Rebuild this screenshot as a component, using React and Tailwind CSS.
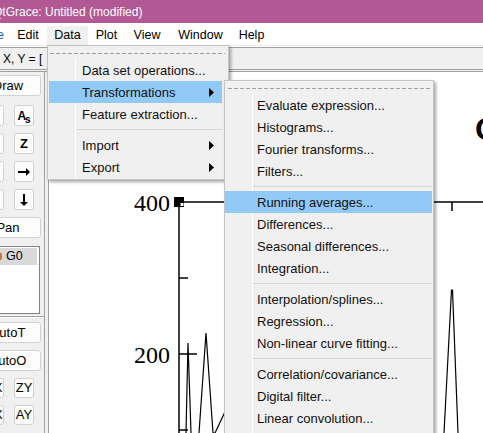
import React from "react";

const Arrow = () => (
  <svg width="5" height="9" viewBox="0 0 5 9" className="absolute right-[8px] top-[7px]">
    <path d="M0 0 L5 4.5 L0 9 Z" fill="#000" />
  </svg>
);

function Item({ label, hl, sub, pl = "pl-[33px]", mx = "ml-px mr-[6px]" }) {
  return (
    <div
      className={`relative h-[22px] flex items-center ${pl} ${mx} ${hl ? "bg-[#91c9f7]" : ""}`}
    >
      <span className="text-[13px] text-[#111] whitespace-nowrap translate-y-[0.5px]">{label}</span>
      {sub && <Arrow />}
    </div>
  );
}

function Sep({ cls }) {
  return (
    <div className="h-[9px] flex items-center">
      <div className={`h-px flex-1 bg-[#d7d7d7] ${cls}`} />
    </div>
  );
}

function Btn({ children, w = "w-[20px]", h = "h-[21px]", cls = "" }) {
  return (
    <div
      className={`${w} ${h} shrink-0 rounded-[3px] border border-[#d2d2d2] bg-[#fdfdfd] flex items-center justify-center text-[13px] text-black ${cls}`}
    >
      {children}
    </div>
  );
}

export default function App() {
  return (
    <div className="relative w-[483px] h-[433px] overflow-hidden bg-white font-['Liberation_Sans',Arial,sans-serif]">
      {/* title bar */}
      <div className="h-[23px] bg-[#b15895] text-white text-[12px] flex items-center whitespace-nowrap">
        <span className="ml-[-7px]">QtGrace: Untitled (modified)</span>
      </div>
      {/* menu bar */}
      <div className="h-[22px] bg-white flex items-end text-[12.5px] text-black whitespace-nowrap">
        <div className="w-[9px] h-[19px] overflow-hidden flex items-center justify-end">
          <span className="mr-[5px] text-[#1c63c4]">File</span>
        </div>
        <div className="w-[38px] h-[19px] flex items-center justify-center">Edit</div>
        <div className="w-[41px] h-[19px] flex items-center justify-center bg-[#f0f0f0]">Data</div>
        <div className="w-[37px] h-[19px] flex items-center justify-center">Plot</div>
        <div className="w-[44px] h-[19px] flex items-center justify-center">View</div>
        <div className="w-[63px] h-[19px] flex items-center justify-center">Window</div>
        <div className="w-[39px] h-[19px] flex items-center justify-center">Help</div>
      </div>
      <div className="h-px bg-[#ededed]" />
      <div className="h-px bg-white" />
      <div className="h-px bg-[#a0a0a0]" />
      <div className="h-[21px] bg-[#f0f0f0] flex items-center text-[12px] text-black whitespace-nowrap">
        <span className="ml-[3px]">X, Y = [</span>
      </div>
      <div className="h-px bg-[#a0a0a0]" />
      <div className="h-px bg-[#f0f0f0]" />
      <div className="h-px bg-[#a0a0a0]" />

      {/* main row */}
      <div className="flex h-[361px]">
        {/* left panel */}
        <div className="w-[44px] shrink-0 bg-[#f0f0f0] overflow-hidden flex flex-col whitespace-nowrap">
          <Btn w="w-[66px]" cls="ml-[-25px] mt-[3px]">Draw</Btn>
          <div className="flex gap-[10px] ml-[-16px] mt-[9px]">
            <Btn>↖</Btn>
            <Btn>
              <span className="relative font-bold text-[12px] leading-none">
                A<span className="text-[10px] relative top-[3px] -ml-[1px]">s</span>
              </span>
            </Btn>
          </div>
          <div className="flex gap-[10px] ml-[-16px] mt-[7px]">
            <Btn><span className="font-bold">Z</span></Btn>
            <Btn><span className="font-bold">Z</span></Btn>
          </div>
          <div className="flex gap-[10px] ml-[-16px] mt-[7px]">
            <Btn>
              <svg width="14" height="10" viewBox="0 0 14 10"><path d="M13 4h-8V1L1 5l4 4V6h8z" fill="#000" /></svg>
            </Btn>
            <Btn>
              <svg width="14" height="10" viewBox="0 0 14 10"><path d="M1 4h8V1l4 4-4 4V6H1z" fill="#000" /></svg>
            </Btn>
          </div>
          <div className="flex gap-[10px] ml-[-16px] mt-[7px]">
            <Btn>
              <svg width="10" height="14" viewBox="0 0 10 14"><path d="M4 13V5H1l4-4 4 4H6v8z" fill="#000" /></svg>
            </Btn>
            <Btn>
              <svg width="10" height="14" viewBox="0 0 10 14"><path d="M4 1v8H1l4 4 4-4H6V1z" fill="#000" /></svg>
            </Btn>
          </div>
          <Btn w="w-[66px]" cls="ml-[-25px] mt-[7px]">Pan</Btn>
          <div className="ml-[-20px] w-[60px] h-[68px] mt-[8px] border border-[#828282] bg-white p-px">
            <div className="h-[17px] bg-[#d9d9d9] flex items-center text-[12.5px] mr-px">
              <span className="ml-[12px] w-[8px] h-[9px] rounded-full bg-[#b8743a]" />
              <span className="ml-[4px]">G0</span>
            </div>
          </div>
          <div className="mt-[2px] h-px bg-[#a0a0a0]" />
          <div className="h-px bg-white" />
          <Btn w="w-[66px]" cls="ml-[-25px] mt-[4px]">AutoT</Btn>
          <Btn w="w-[66px]" cls="ml-[-25px] mt-[7px]">AutoO</Btn>
          <div className="flex gap-[10px] ml-[-16px] mt-[7px]">
            <Btn h="h-[20px]">ZX</Btn>
            <Btn h="h-[20px]">ZY</Btn>
          </div>
          <div className="flex gap-[10px] ml-[-16px] mt-[7px]">
            <Btn h="h-[20px]">AX</Btn>
            <Btn h="h-[20px]">AY</Btn>
          </div>
        </div>
        <div className="w-px bg-[#a0a0a0]" />
        <div className="w-[3px] bg-[#f0f0f0]" />
        <div className="w-px bg-[#a0a0a0]" />
        {/* plot canvas */}
        <div className="flex-1 bg-white overflow-hidden">
          <svg width="434" height="361" viewBox="49 72 434 361">
            <text x="170" y="211" textAnchor="end" fontFamily="'Liberation Serif', serif" fontSize="24" fill="#000">400</text>
            <text x="170" y="363" textAnchor="end" fontFamily="'Liberation Serif', serif" fontSize="24" fill="#000">200</text>
            <text x="475" y="140" fontFamily="'Liberation Sans', sans-serif" fontWeight="bold" fontSize="32" fill="#000">O</text>
            <g stroke="#000" strokeWidth="1.5" fill="none">
              <line x1="179" y1="202" x2="179" y2="433" />
              <line x1="179" y1="202" x2="483" y2="202" />
              <line x1="179" y1="278" x2="188" y2="278" />
              <line x1="179" y1="354" x2="197" y2="354" />
              <line x1="179" y1="430" x2="188" y2="430" />
              <line x1="452" y1="202" x2="452" y2="211" />
              <polyline strokeWidth="1.2" points="186,433 188,343 191,433" />
              <polyline strokeWidth="1.2" points="199,433 206,333 213,433 215,433 240,380" />
              <polyline strokeWidth="1.2" points="444,433 451.5,290 452.5,290 458,433" />
            </g>
            <rect x="174" y="197" width="10" height="10" fill="#000" />
            <rect x="180.5" y="203" width="3" height="3" fill="#fff" />
          </svg>
        </div>
      </div>

      {/* Data menu */}
      <div className="absolute left-[47px] top-[45px] w-[182px] h-[135px] bg-[#f0f0f0] border border-[#c4c4c4] shadow-[2px_2px_3px_rgba(0,0,0,0.35)]">
        <div className="absolute left-[27px] top-[12px] bottom-0 w-px bg-white" />
        <div className="relative h-[13px]">
          <div className="absolute left-[2px] right-[3px] top-[7px] h-px bg-[repeating-linear-gradient(90deg,#a0a0a0_0_4px,transparent_4px_6px)]" />
        </div>
        <div className="relative">
          <Item label="Data set operations..." />
          <Item label="Transformations" hl sub />
          <Item label="Feature extraction..." />
          <Sep cls="ml-[29px] mr-[6px]" />
          <Item label="Import" sub />
          <Item label="Export" sub />
        </div>
      </div>

      {/* Transformations submenu */}
      <div className="absolute left-[224px] top-[80px] w-[210px] h-[370px] bg-[#f0f0f0] border border-[#c4c4c4] shadow-[2px_2px_3px_rgba(0,0,0,0.35)]">
        <div className="absolute left-[27px] top-[12px] bottom-0 w-px bg-white" />
        <div className="relative h-[13px]">
          <div className="absolute left-[3px] right-[2px] top-[7px] h-px bg-[repeating-linear-gradient(90deg,#a0a0a0_0_4px,transparent_4px_6px)]" />
        </div>
        <div className="relative">
          {["Evaluate expression...", "Histograms...", "Fourier transforms...", "Filters..."].map((l) => (
            <Item key={l} label={l} pl="pl-[32px]" mx="mr-[1px]" />
          ))}
          <Sep cls="ml-[28px] mr-[1px]" />
          <Item label="Running averages..." hl pl="pl-[32px]" mx="mr-[1px]" />
          {["Differences...", "Seasonal differences...", "Integration..."].map((l) => (
            <Item key={l} label={l} pl="pl-[32px]" mx="mr-[1px]" />
          ))}
          <Sep cls="ml-[28px] mr-[1px]" />
          {["Interpolation/splines...", "Regression...", "Non-linear curve fitting..."].map((l) => (
            <Item key={l} label={l} pl="pl-[32px]" mx="mr-[1px]" />
          ))}
          <Sep cls="ml-[28px] mr-[1px]" />
          {["Correlation/covariance...", "Digital filter...", "Linear convolution...", "Geometric transforms..."].map((l) => (
            <Item key={l} label={l} pl="pl-[32px]" mx="mr-[1px]" />
          ))}
        </div>
      </div>
    </div>
  );
}
